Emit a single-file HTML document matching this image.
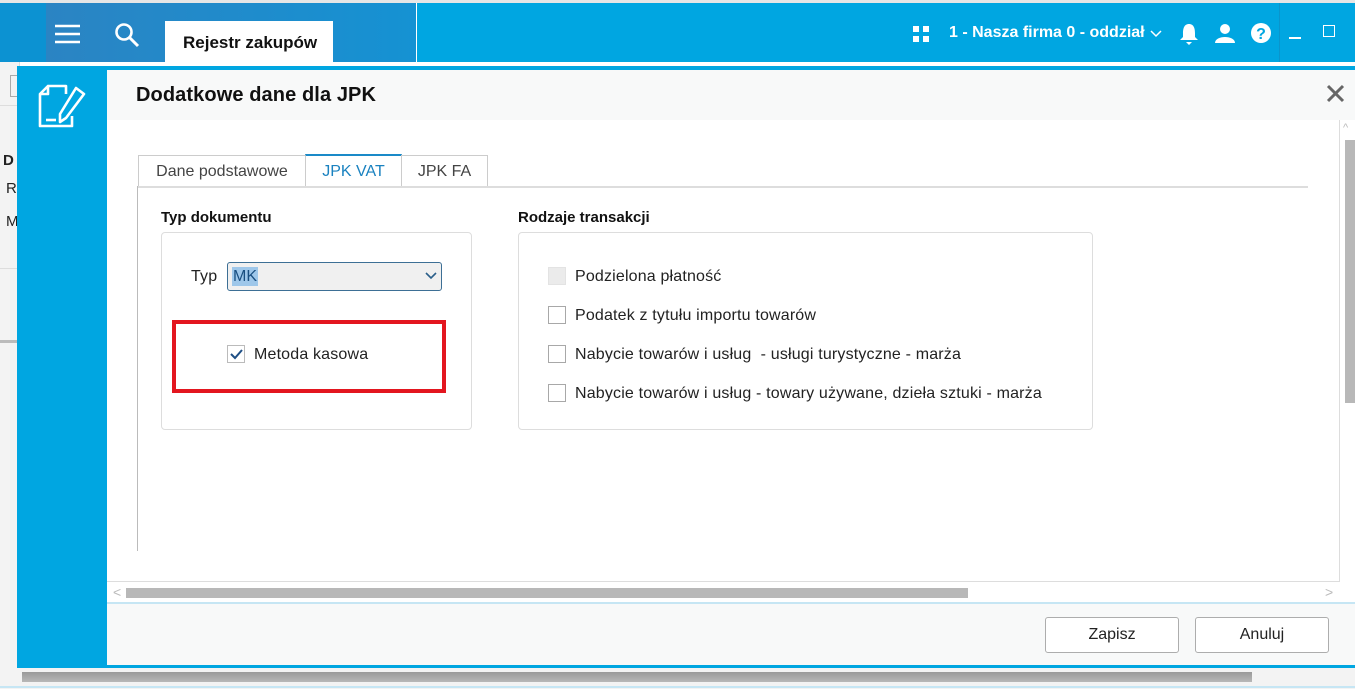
<!DOCTYPE html>
<html><head><meta charset="utf-8"><style>
*{box-sizing:border-box;margin:0;padding:0}
body{width:1355px;height:689px;overflow:hidden;position:relative;font-family:"Liberation Sans",sans-serif;background:#fff;color:#222}
.a{position:absolute}
.cb{position:absolute;width:18px;height:18px;border:1px solid #a8a8a8;background:#fff}
.lbl{position:absolute;font-size:16px;color:#222;letter-spacing:0.17px}
.btn{position:absolute;top:617px;width:134px;height:36px;border:1px solid #adadad;border-radius:3px;background:#fff;font-size:16px;text-align:center;line-height:34px}
</style></head><body>
<div class="a" style="left:0;top:0;width:1355px;height:3px;background:#e6e6e6"></div>
<div class="a" style="left:0;top:3px;width:46px;height:59px;background:#0c92d2"></div>
<div class="a" style="left:46px;top:3px;width:370px;height:59px;background:linear-gradient(90deg,#2b84c3,#1592d3)"></div>
<div class="a" style="left:416px;top:8px;width:1px;height:54px;background:#fff"></div>
<div class="a" style="left:417px;top:3px;width:938px;height:59px;background:#00a6e1"></div>
<div class="a" style="left:1279px;top:3px;width:1px;height:59px;background:#0a95cc"></div>
<svg class="a" style="left:55px;top:24px" width="26" height="20"><g stroke="#fff" stroke-width="2.6"><line x1="0" y1="2" x2="25" y2="2"/><line x1="0" y1="10" x2="25" y2="10"/><line x1="0" y1="18" x2="25" y2="18"/></g></svg>
<svg class="a" style="left:114px;top:22px" width="28" height="26"><circle cx="10" cy="10" r="7.5" stroke="#fff" stroke-width="2.6" fill="none"/><line x1="15.5" y1="15.5" x2="24" y2="24" stroke="#fff" stroke-width="3"/></svg>
<div class="a" style="left:165px;top:21px;width:168px;height:41px;background:#fff;font-size:17px;font-weight:bold;line-height:43px;padding-left:18px;color:#111">Rejestr zakupów</div>
<svg class="a" style="left:913px;top:26px" width="16" height="16"><g fill="#fff"><rect x="0" y="0" width="6" height="6"/><rect x="10" y="0" width="6" height="6"/><rect x="0" y="10" width="6" height="6"/><rect x="10" y="10" width="6" height="6"/></g></svg>
<div class="a" style="left:949px;top:24px;font-size:16px;font-weight:bold;color:#fff">1 - Nasza firma 0 - oddział</div>
<svg class="a" style="left:1150px;top:30px" width="12" height="8"><polyline points="1,1 6,6 11,1" stroke="#fff" stroke-width="1.5" fill="none"/></svg>
<svg class="a" style="left:1179px;top:23px" width="20" height="22"><path d="M10 1 C5 1 4 6 4 10 L4 14 L1 17 L19 17 L16 14 L16 10 C16 6 15 1 10 1Z M7 19 L13 19 L10 22Z" fill="#fff"/></svg>
<svg class="a" style="left:1214px;top:23px" width="22" height="20"><circle cx="11" cy="6" r="5" fill="#fff"/><path d="M1 20 C1 12 21 12 21 20Z" fill="#fff"/></svg>
<svg class="a" style="left:1250px;top:22px" width="22" height="22"><circle cx="11" cy="11" r="10" fill="#fff"/><text x="11" y="17" font-size="16" font-weight="bold" text-anchor="middle" fill="#00a6e1" font-family="Liberation Sans">?</text></svg>
<div class="a" style="left:1289px;top:37px;width:12px;height:2px;background:#fff"></div>
<div class="a" style="left:1323px;top:25px;width:12px;height:12px;border:1.5px solid #fff"></div>
<!-- app background left -->
<div class="a" style="left:0;top:62px;width:20px;height:627px;background:#f3f3f3;border-right:1px solid #ddd"></div>
<div class="a" style="left:10px;top:75px;width:10px;height:22px;border:1px solid #aaa;border-right:none"></div>
<div class="a" style="left:0;top:105px;width:20px;height:1px;background:#ddd"></div>
<div class="a" style="left:3px;top:152px;font-size:15px;font-weight:bold">D</div>
<div class="a" style="left:6px;top:180px;font-size:15px">R</div>
<div class="a" style="left:6px;top:213px;font-size:15px">M</div>
<div class="a" style="left:0;top:268px;width:20px;height:1px;background:#ddd"></div>
<div class="a" style="left:0;top:340px;width:20px;height:3px;background:#bbb"></div>
<!-- dialog -->
<div class="a" style="left:17px;top:66px;width:1338px;height:601px;background:#00a6e1"></div>
<svg class="a" style="left:36px;top:84px" width="52" height="48" fill="none" stroke="#fff" stroke-width="2.6" stroke-linejoin="round"><path d="M12 2 L30 2 L30 10 M4 10 L12 2 L12 10 L4 10 L4 42 L36 42 L36 32"/><line x1="10" y1="36" x2="20" y2="36"/><path d="M40 4 L48 10 L30 34 L24 38 L24 30 Z"/></svg>
<div class="a" style="left:107px;top:70px;width:1248px;height:595px;background:#fff"></div>
<div class="a" style="left:107px;top:70px;width:1248px;height:50px;background:#f8f9f9"></div>
<div class="a" style="left:136px;top:84px;font-size:20px;font-weight:bold;color:#111;letter-spacing:0.1px">Dodatkowe dane dla JPK</div>
<svg class="a" style="left:1326px;top:84px" width="19" height="19"><g stroke="#666" stroke-width="3"><line x1="2" y1="2" x2="17" y2="17"/><line x1="17" y1="2" x2="2" y2="17"/></g></svg>
<!-- tabs -->
<div class="a" style="left:138px;top:155px;width:168px;height:32px;border:1px solid #ccc;border-bottom:none;font-size:16px;color:#444;text-align:center;line-height:31px">Dane podstawowe</div>
<div class="a" style="left:305px;top:154px;width:97px;height:33px;border:1px solid #ccc;border-top:2px solid #1a8ac8;border-bottom:none;background:#fff;font-size:16px;color:#1a82c0;text-align:center;line-height:31px">JPK VAT</div>
<div class="a" style="left:401px;top:155px;width:87px;height:32px;border:1px solid #ccc;border-bottom:none;font-size:16px;color:#444;text-align:center;line-height:31px">JPK FA</div>
<div class="a" style="left:137px;top:186px;width:1171px;height:2px;background:#ddd"></div>
<div class="a" style="left:137px;top:186px;width:1px;height:365px;background:#bbb"></div>
<!-- Typ dokumentu -->
<div class="a" style="left:161px;top:209px;font-size:15px;font-weight:bold;color:#111">Typ dokumentu</div>
<div class="a" style="left:161px;top:232px;width:311px;height:198px;border:1px solid #ddd;border-radius:4px"></div>
<div class="lbl" style="left:191px;top:268px">Typ</div>
<div class="a" style="left:227px;top:262px;width:215px;height:29px;border:1px solid #3d6f95;border-radius:3px;background:#f0f0f0"></div>
<div class="a" style="left:232px;top:267px;font-size:16px;background:#9ec7ea;color:#1a4f80;padding:0 1px;line-height:19px">MK</div>
<svg class="a" style="left:425px;top:272px" width="12" height="8"><polyline points="1,1 6,6 11,1" stroke="#2b5f8a" stroke-width="1.6" fill="none"/></svg>
<div class="a" style="left:172px;top:320px;width:274px;height:73px;border:4px solid #e3161f"></div>
<div class="cb" style="left:227px;top:345px;border-color:#bbb"></div>
<svg class="a" style="left:229px;top:347px" width="15" height="14"><polyline points="2,7 6,11 13,3" stroke="#1f4f85" stroke-width="2" fill="none"/></svg>
<div class="lbl" style="left:254px;top:346px">Metoda kasowa</div>
<!-- Rodzaje -->
<div class="a" style="left:518px;top:209px;font-size:15px;font-weight:bold;color:#111">Rodzaje transakcji</div>
<div class="a" style="left:518px;top:232px;width:575px;height:198px;border:1px solid #ddd;border-radius:4px"></div>
<div class="cb" style="left:548px;top:267px;background:#ebebeb;border-color:#e3e3e3"></div>
<div class="lbl" style="left:575px;top:268px">Podzielona płatność</div>
<div class="cb" style="left:548px;top:306px"></div>
<div class="lbl" style="left:575px;top:307px">Podatek z tytułu importu towarów</div>
<div class="cb" style="left:548px;top:345px"></div>
<div class="lbl" style="left:575px;top:346px">Nabycie towarów i usług &nbsp;- usługi turystyczne - marża</div>
<div class="cb" style="left:548px;top:384px"></div>
<div class="lbl" style="left:575px;top:385px">Nabycie towarów i usług - towary używane, dzieła sztuki - marża</div>
<!-- scrollbars -->
<div class="a" style="left:1339px;top:120px;width:1px;height:462px;background:#ddd"></div>
<div class="a" style="left:107px;top:581px;width:1233px;height:1px;background:#ddd"></div>
<div class="a" style="left:1345px;top:140px;width:10px;height:263px;background:#b8b8b8"></div>
<div class="a" style="left:1343px;top:122px;font-size:11px;color:#bbb">^</div>
<div class="a" style="left:126px;top:588px;width:842px;height:10px;background:#b8b8b8"></div>
<div class="a" style="left:113px;top:584px;font-size:14px;color:#bbb">&lt;</div>
<div class="a" style="left:1325px;top:584px;font-size:14px;color:#bbb">&gt;</div>
<!-- footer -->
<div class="a" style="left:107px;top:602px;width:1248px;height:63px;background:#f8f9f9;border-top:2px solid #c6e6f4"></div>
<div class="btn" style="left:1045px">Zapisz</div>
<div class="btn" style="left:1195px">Anuluj</div>
<!-- bottom -->
<div class="a" style="left:0;top:667px;width:1355px;height:22px;background:#f3f3f3"></div>
<div class="a" style="left:17px;top:665px;width:1338px;height:3px;background:#00a6e1"></div>
<div class="a" style="left:22px;top:672px;width:1230px;height:10px;background:linear-gradient(#9a9a9a,#b8b8b8)"></div>
<div class="a" style="left:0;top:686px;width:1355px;height:2px;background:#c6e6f4"></div>
</body></html>
